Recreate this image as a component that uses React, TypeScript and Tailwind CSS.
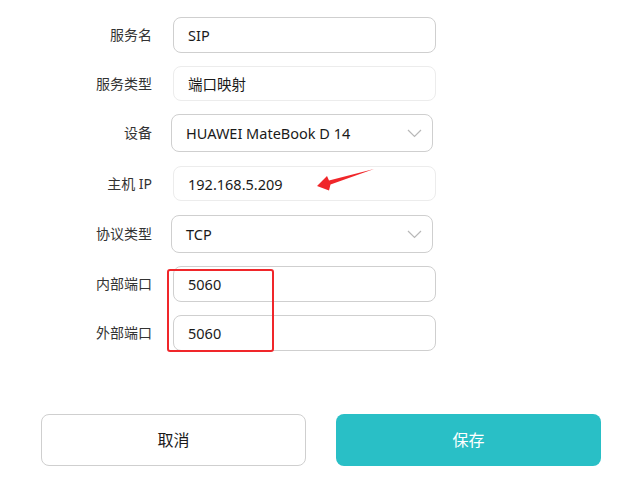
import React from "react";

const font = { fontFamily: '"Noto Sans", "Noto Sans CJK SC", sans-serif' };

function Chevron() {
  return (
    <svg width="15" height="9" viewBox="0 0 15 9" className="shrink-0">
      <path d="M1 1 L7.5 7.5 L14 1" fill="none" stroke="#b8b8b8" strokeWidth="1.2" />
    </svg>
  );
}

function Row({ label, value, kind, className }: { label: string; value: string; kind: "input" | "readonly" | "select"; className: string }) {
  const box =
    kind === "select"
      ? "ml-[19px] w-[262px] h-[38px] border-[#cfcfcf] justify-between pr-[10px] pl-[14px]"
      : kind === "readonly"
      ? "ml-[21px] w-[263px] h-[35px] border-[#ececec] pl-[14px]"
      : "ml-[21px] w-[263px] h-[36px] border-[#cfcfcf] pl-[14px]";
  return (
    <div className={`flex items-center ${className}`}>
      <div className="w-[152px] text-right text-[14px] leading-[20px] text-[#333]">{label}</div>
      <div className={`flex items-center rounded-[8px] border bg-white text-[14.5px] leading-[20px] text-[#1a1a1a] ${box}`}>
        <span>{value}</span>
        {kind === "select" && <Chevron />}
      </div>
    </div>
  );
}

export default function App() {
  return (
    <div className="relative w-[627px] h-[489px] bg-white overflow-hidden" style={font}>
      <div className="flex flex-col pt-[17px]">
        <Row label="服务名" value="SIP" kind="input" className="" />
        <Row label="服务类型" value="端口映射" kind="readonly" className="mt-[13px]" />
        <Row label="设备" value="HUAWEI MateBook D 14" kind="select" className="mt-[13px]" />
        <Row label="主机 IP" value="192.168.5.209" kind="readonly" className="mt-[14px]" />
        <Row label="协议类型" value="TCP" kind="select" className="mt-[14px]" />
        <Row label="内部端口" value="5060" kind="input" className="mt-[13px]" />
        <Row label="外部端口" value="5060" kind="input" className="mt-[13px]" />
      </div>

      <div className="flex justify-between pr-[26px] pl-[41px] mt-[63px]">
        <button className="w-[265px] h-[52px] rounded-[8px] border border-[#cfcfcf] bg-white text-[16px] text-[#1a1a1a]">
          取消
        </button>
        <button className="w-[265px] h-[52px] rounded-[8px] bg-[#29bfc6] text-[16px] text-white">
          保存
        </button>
      </div>

      {/* annotations */}
      <div className="absolute left-[167px] top-[269px] w-[107px] h-[83px] border-2 border-[#f0262a] rounded-[3px]" />
      <svg className="absolute left-[305px] top-[162px]" width="75" height="32" viewBox="0 0 75 32">
        <polygon points="12,24 22,14 24,18.5 69,7 25.5,22.5 24,28.5" fill="#f0262a" />
      </svg>
    </div>
  );
}
